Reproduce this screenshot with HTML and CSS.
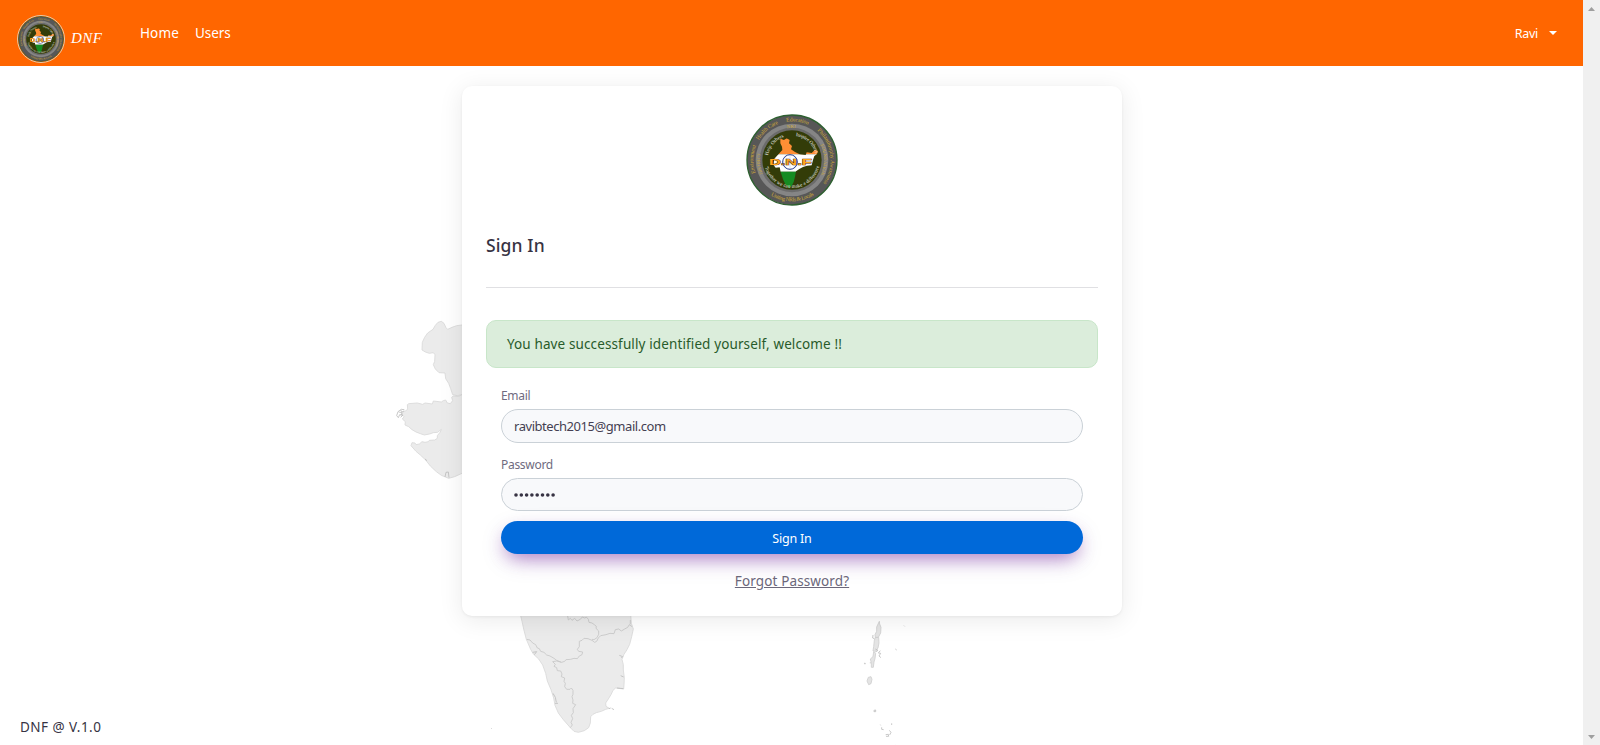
FILE: index.html
```html
<!DOCTYPE html>
<html lang="en">
<head>
<meta charset="utf-8">
<title>DNF</title>
<link rel="stylesheet" href="styles.css">
</head>
<body>
<svg class="defs" viewBox="0 0 400 400" aria-hidden="true">
  <symbol id="seal" viewBox="49 42 276 276">
    <circle cx="187" cy="180" r="135" fill="#575757" stroke="#2e6030" stroke-width="4"/>
    <circle cx="187" cy="180" r="109" fill="#858585"/>
    <circle cx="187" cy="180" r="97" fill="#6b6b6b"/>
    <circle cx="187" cy="180" r="89" fill="#333c08"/>
    <clipPath id="land"><path d="M152 116L163 120 171 115 180 120 178 130 187 138 184 148 196 156 210 163 228 165 231 157 246 159 256 149 265 153 262 162 254 168 250 180 246 196 232 197 220 201 209 207 199 214 196 230 192 246 186 258 178 264 168 255 160 238 153 216 150 202 138 203 131 194 134 176 145 164 158 150 157 140 152 130z"/></clipPath>
    <g clip-path="url(#land)">
      <path fill="#ff8f35" d="M100 110h180v53H100z"/>
      <path fill="#fff" d="M100 163h180v52H100z"/>
      <path fill="#168b22" d="M100 215h180v60H100z"/>
    </g>
    <text x="118" y="196" textLength="128" lengthAdjust="spacingAndGlyphs" class="seal-name">D.N.F</text>
    <circle cx="181" cy="186" r="22" fill="none" stroke="#283f91" stroke-width="3"/>
    <path d="M164 170l34 32M181 165v42M159 186h44M164 202l34-32" stroke="#283f91" opacity=".4"/>
    <path id="ring-out" d="M187 296a116 116 0 1 1 .1 0" fill="none"/>
    <path id="ring-low" d="M63 180a124 124 0 0 0 248 0" fill="none"/>
    <path id="ring-mid" d="M187 276a96 96 0 1 1 .1 0" fill="none"/>
    <path id="ring-in" d="M187 253a73 73 0 1 1 .1 0" fill="none"/>
    <path id="ring-in-low" d="M103 180a84 84 0 0 0 168 0" fill="none"/>
    <g class="seal-gold">
      <text><textPath href="#ring-out" startOffset="142" textLength="84">Environment</textPath></text>
      <text><textPath href="#ring-out" startOffset="244" textLength="78">Health Care</textPath></text>
      <text><textPath href="#ring-out" startOffset="347" textLength="67">Education</textPath></text>
      <text><textPath href="#ring-out" startOffset="446" textLength="174">Philanthrophy Awareness</textPath></text>
      <text><textPath href="#ring-low" startOffset="128" textLength="136">Uniting NRIs &amp; Locals</textPath></text>
      <text class="seal-small"><textPath href="#ring-mid" startOffset="108" textLength="62">DISTRICT</textPath></text>
      <text class="seal-small"><textPath href="#ring-mid" startOffset="286" textLength="26">NRI</textPath></text>
      <text class="seal-small"><textPath href="#ring-mid" startOffset="405" textLength="92">FOUNDATION</textPath></text>
    </g>
    <g class="seal-white">
      <text><textPath href="#ring-in" startOffset="128" textLength="76">Help Others</textPath></text>
      <text><textPath href="#ring-in" startOffset="240" textLength="84">Inspire Others</textPath></text>
      <text><textPath href="#ring-in-low" startOffset="22" textLength="222">Together we can make a difference</textPath></text>
    </g>
  </symbol>
</svg>

<div class="page">
  <header class="navbar">
    <a class="brand">
      <svg class="brand-logo"><use href="#seal"/></svg>
      <span class="brand-name">DNF</span>
    </a>
    <nav class="nav-links">
      <a class="home">Home</a>
      <a class="users">Users</a>
    </nav>
    <div class="account"><span>Ravi</span><i class="caret"></i></div>
  </header>

  <svg class="map" viewBox="0 0 1583 745" aria-hidden="true">
    <g transform="translate(380 300) scale(.33333)">
      <path class="state" d="M260 74L246 75 230 77 216 82 203 88 198 83 192 70 184 64 174 67 166 76 159 88 143 99 134 112 127 127 126 150 136 156 148 160 160 158 165 164 164 184 160 194 166 207 177 218 195 219 197 236 206 250 212 266 218 284 232 287 246 284H280V70z"/>
      <path class="state" d="M260 284L246 284 236 289 220 288 215 292 218 302 211 311 202 309 197 300 190 302 184 306 160 303 157 312 135 309 128 313 112 309 86 311 82 314 83 327 77 333 71 334 65 343 72 350 67 357 76 365 75 375 86 380 96 389 108 396 121 401 133 405 149 402 160 398 173 397 184 388 181 396 172 407 172 415 164 420 148 421 145 425 135 427 126 425 118 432 108 434 105 429 96 428 93 437 108 454 121 465 137 480 151 498 169 515 184 526 206 535 224 530 246 520H280V284z"/>
      <path class="detail" d="M73 329l-9-1-10 7-4 12 5 6 4-9 10 1-7 7M56 336l10 2-3 9M62 330l4 6 6-3M195 531l3-14 7-1 2 17M135 477l6 5"/>
    </g>
    <g transform="translate(470 590) scale(.33333)">
      <path class="state" d="M148 60L156 94 162 121 169 148 182 178 190 192 206 207 218 225 227 250 232 273 243 299 251 324 255 346 265 369 280 389 301 413 312 424 325 427 343 422 356 413 361 399 362 380 369 373 379 368 394 364 407 358 418 355 408 349 407 339 415 327 423 314 429 301 437 294 461 297 462 285 463 263 460 240 460 224 456 208 462 193 471 179 479 163 485 140 490 117 484 100 481 60z"/>
      <path class="border" d="M170 148L180 150 188 159 197 164 202 174 208 176 212 184 222 187 230 195 240 198 252 205 260 211 275 217 284 214 288 209 302 208 312 205 322 206 328 198 336 194 338 186 326 184 322 178 328 170 328 154 336 151 342 145 354 146 366 151 374 157 380 154 385 144 392 137 408 134 420 130 432 131 436 119 446 117 454 123 464 117 473 112 478 104 486 110M293 78L295 90 301 85 306 91 314 85 321 93 331 88 337 81 343 84 350 82 355 88 357 97 366 99 373 104 379 109 378 115 386 123 386 133 381 143 372 149 366 148M248 215L256 223 252 229 260 233 262 242 272 243 276 252 274 260 284 264 282 274 286 280 284 290 290 298 300 298 304 294 309 301 309 313 306 320 309 330 308 340 317 344 309 356 310 368 304 376 308 386 303 397 307 405 301 413M248 215l12-2 14 4M481 90v13"/>
      <path class="detail" d="M188 187l12-2-7 9M448 196l10 4-4 4M452 257l9 4M249 310l7 12 3 15M255 340h9M441 294l19 2M417 356l5-2M425 355l7 4M63 414l2 2"/>
    </g>
    <g transform="translate(840 600) scale(.33333)">
      <path class="state isle" d="M118 64l1 8 4 10-1 17-7 13-9 1-1-9 5-10 0-13zM106 112l10 0 1 17-3 15-7 10-8-1 2-13 2-19zM101 155l6 5-2 16-3 10-2 16-6 0 0-13-3-12 8-7zM85 232l8-2 3 8-3 13-7 3-5-11z"/>
      <path class="detail" d="M99 105l-1 9 5 2M121 152l-6 7 7 1-5 8 6 5M106 147l8 4-7 5M72 190l4 0-1 3M91 190v-3M166 147l4 3M192 77l2 2M102 331l5-1 0 5-5 0zM121 374l1 2M125 382v6l6 1M155 370v5M148 391l5 6-4 8M137 404l8-1 1 6-8 0M166 436l3 2"/>
    </g>
  </svg>

  <main class="card">
    <svg class="card-logo"><use href="#seal"/></svg>
    <h1 class="title"><span>Sign In</span></h1>
    <div class="alert"><span>You have successfully identified yourself, welcome !!</span></div>
    <form class="form">
      <label for="email" class="email-label">Email</label>
      <input id="email" type="text" value="ravibtech2015@gmail.com">
      <label for="password" class="password-label">Password</label>
      <div class="input masked" id="password">
        <svg class="dots" viewBox="0 0 44 6">
          <circle cx="3" cy="3" r="1.8"/><circle cx="8.3" cy="3" r="1.8"/><circle cx="13.6" cy="3" r="1.8"/><circle cx="18.9" cy="3" r="1.8"/><circle cx="24.2" cy="3" r="1.8"/><circle cx="29.5" cy="3" r="1.8"/><circle cx="34.8" cy="3" r="1.8"/><circle cx="40.1" cy="3" r="1.8"/>
        </svg>
      </div>
      <button type="button">Sign In</button>
      <a class="forgot">Forgot Password?</a>
    </form>
  </main>
  <footer class="footer"><span>DNF @ V.1.0</span></footer>
</div>
<aside class="scrollbar"><i class="up"></i><i class="down"></i></aside>
</body>
</html>
```
FILE: styles.css
```css
* { box-sizing: border-box; }
body {
  margin: 0;
  height: 745px;
  overflow: hidden;
  display: flex;
  background: #fff;
  color: #373343;
  font-family: "Noto Sans", "Open Sans", sans-serif;
  font-size: 13.5px;
  letter-spacing: .12px;
}
.defs { position: absolute; width: 0; height: 0; }
.page { position: relative; width: 1583px; display: flex; flex-direction: column; }

.navbar {
  height: 66px;
  flex: none;
  display: flex;
  background: #f60;
  color: #fff;
}
.brand { display: flex; width: 140px; padding: 15px 0 0 17px; }
.brand-logo { width: 48px; height: 48px; border-radius: 50%; border: 1px solid #e8c9a8; }
.brand-name {
  margin: 12px 0 0 6px;
  font: italic 15px/22px "Liberation Serif", serif;
  letter-spacing: .4px;
}
.nav-links { display: flex; gap: 16px; padding-top: 23px; line-height: 20px; }
.users { letter-spacing: -.05px; }
.account { display: flex; margin-left: auto; padding: 24px 26px 0 0; font-size: 12.5px; line-height: 20px; letter-spacing: -.3px; }
.caret { width: 8px; height: 4px; margin: 7px 0 0 11px; background: #fff; clip-path: polygon(0 0, 100% 0, 50% 100%); }

.map { position: absolute; left: 0; top: 0; width: 1583px; height: 745px; }
.state { fill: #ebebeb; stroke: #d9d9d9; stroke-width: 2.5; }
.isle { stroke: #cfcfcf; fill: #e4e4e4; }
.border { fill: none; stroke: #c6c6c6; stroke-width: 2.5; }
.detail { fill: none; stroke: #bdbdbd; stroke-width: 2.5; }

.card {
  position: relative;
  width: 660px;
  height: 530px;
  margin: 20px auto 0 462px;
  padding: 28px 24px 0;
  display: flex;
  flex-direction: column;
  background: #fff;
  border-radius: 10px;
  box-shadow: 0 4px 24px 1px rgba(0, 0, 0, .08), 0 1px 3px rgba(0, 0, 0, .06);
}
.card-logo { width: 92px; height: 92px; align-self: center; flex: none; letter-spacing: 0; }
.title {
  height: 82px;
  margin: 0;
  padding-top: 26px;
  border-bottom: 1px solid #e0e0e3;
  font-size: 17.5px;
  line-height: 26px;
  font-weight: 500;
}
.alert {
  height: 48px;
  margin-top: 32px;
  padding: 0 20px;
  border: 1px solid #c8e6c9;
  border-radius: 10px;
  background: #dbeddb;
  color: #285b2a;
  line-height: 46px;
}
.form { display: flex; flex-direction: column; padding: 18px 15px 0; }
label { height: 23px; font-size: 12px; line-height: 20px; letter-spacing: -.3px; color: #6f6b80; }
input, .input {
  width: 100%;
  height: 34px;
  padding: 0 12px;
  border: 1px solid #cad1d7;
  border-radius: 17px;
  background: #f8f9fb;
  color: #453f52;
  font: 13px "Noto Sans", sans-serif;
  letter-spacing: -.45px;
}
.password-label { margin-top: 12px; }
.masked { height: 33px; padding-left: 11px; display: flex; align-items: center; }
.dots { width: 44px; height: 6px; margin-top: 1px; fill: #373343; }
button {
  height: 33px;
  margin: 10px 0 0;
  padding: 2px 0 0;
  border: 0;
  border-radius: 17px;
  background: #0069d9;
  color: #fff;
  font: 12.5px "Noto Sans", sans-serif;
  letter-spacing: -.2px;
  box-shadow: 0 8px 25px -4px rgba(81, 0, 140, .28), 0 8px 18px -6px rgba(98, 0, 140, .4);
}
.forgot { align-self: center; margin-top: 17px; line-height: 20px; text-decoration: underline; color: #6b677a; }
.footer { margin: 101px 0 0 20px; line-height: 20px; letter-spacing: .45px; }

.scrollbar { width: 17px; display: flex; flex-direction: column; justify-content: space-between; align-items: center; padding: 7px 0 6px; background: #f0f0f0; }
.up, .down { width: 7px; height: 4px; background: #9f9f9f; clip-path: polygon(50% 0, 100% 100%, 0 100%); }
.down { transform: rotate(180deg); }

.seal-name { font: bold 28px "Liberation Sans", sans-serif; fill: #ffa61d; stroke: #4b2500; stroke-width: 2; paint-order: stroke; letter-spacing: 0; }
.seal-gold { font: 17px "Liberation Serif", serif; fill: #d0ab38; letter-spacing: 0; }
.seal-small { font-size: 14px; }
.seal-white { font: 15px "Liberation Serif", serif; fill: #ececec; letter-spacing: 0; }
```
